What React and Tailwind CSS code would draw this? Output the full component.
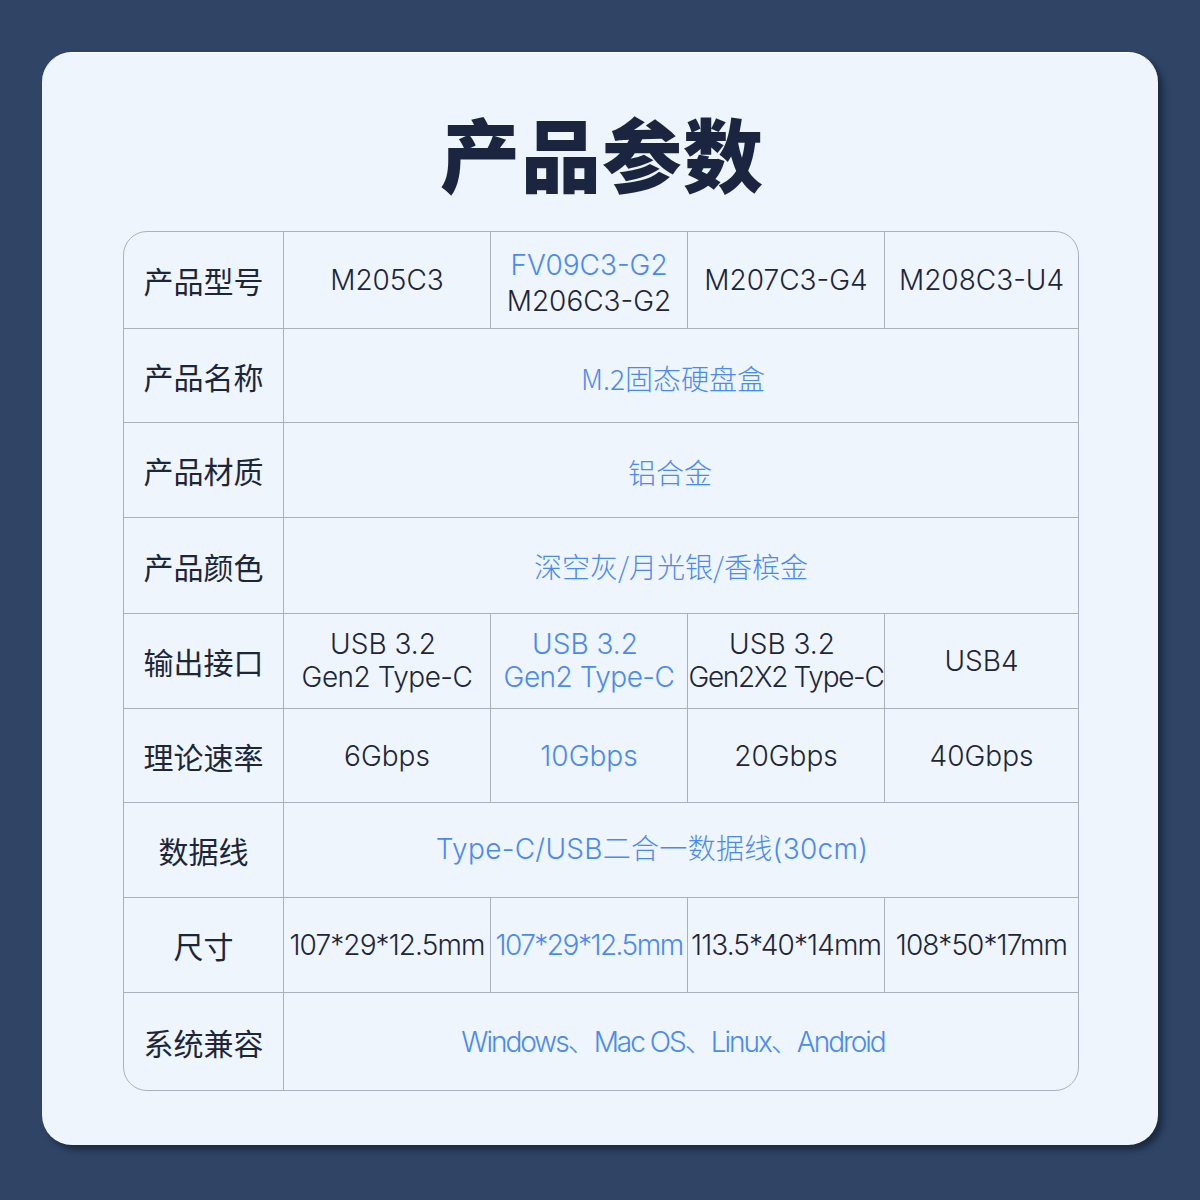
import React from "react";

const DARK = "text-[#1d2639]";
const BLUE = "text-[#4a8af4]";
const CJK = { fontFamily: "'Noto Sans CJK SC', sans-serif", fontWeight: 300 };

function Cell({ children, className = "" }) {
  return (
    <div className={"flex flex-col items-center justify-center text-center whitespace-nowrap border-[#a9b1be] " + className}>
      {children}
    </div>
  );
}

function Label({ children, last }) {
  return (
    <div
      className={"flex items-center justify-center border-r border-[#a9b1be] text-[30px] text-[#1d2639] " + (last ? "" : "border-b")}
      style={{ fontFamily: "'Noto Sans CJK SC', sans-serif", fontWeight: 400 }}
    >
      {children}
    </div>
  );
}

export default function App() {
  const font = { fontFamily: "Inter, 'Noto Sans CJK SC', sans-serif" };
  return (
    <div className="w-[1200px] h-[1200px] bg-[#304566] pt-[52px] pl-[42px]" style={font}>
      <div className="w-[1116px] h-[1093px] rounded-[30px] bg-[#eef5fd] shadow-[5px_5px_6px_rgba(10,20,40,0.55)] border-t border-white flex flex-col items-center pt-[58px]">
        <div className="h-[80px] text-[80px] leading-[80px] text-[#1b2540] tracking-[1px] ml-[4px]" style={{ fontFamily: "'Noto Sans CJK SC', sans-serif", fontWeight: 900 }}>
          产品参数
        </div>
        <div className="mt-[40px] ml-[2px] w-[956px] h-[860px] border border-[#a9b1be] rounded-[24px] overflow-hidden grid grid-cols-[160px_207px_197px_197px_193px] grid-rows-[97px_94px_95px_96px_95px_94px_95px_95px_97px] text-[28px] font-light leading-[34px]">
          {/* Row 1 */}
          <Label>产品型号</Label>
          <Cell className={"border-r border-b " + DARK}>M205C3</Cell>
          <Cell className="border-r border-b leading-[36px] pt-[5px]">
            <span className={BLUE}>FV09C3-G2</span>
            <span className={DARK}>M206C3-G2</span>
          </Cell>
          <Cell className={"border-r border-b " + DARK}>M207C3-G4</Cell>
          <Cell className={"border-b " + DARK}>M208C3-U4</Cell>

          {/* Row 2 */}
          <Label>产品名称</Label>
          <Cell className={"col-span-4 border-b " + BLUE}><span className="ml-[-16px] mt-[4px]" style={CJK}>M.2固态硬盘盒</span></Cell>

          {/* Row 3 */}
          <Label>产品材质</Label>
          <Cell className={"col-span-4 border-b " + BLUE}><span className="ml-[-22px] mt-[4px]" style={CJK}>铝合金</span></Cell>

          {/* Row 4 */}
          <Label>产品颜色</Label>
          <Cell className={"col-span-4 border-b " + BLUE}><span className="ml-[-20px]" style={CJK}>深空灰/月光银/香槟金</span></Cell>

          {/* Row 5 */}
          <Label>输出接口</Label>
          <Cell className={"border-r border-b leading-[33px] " + DARK}><span className="ml-[-8px]">USB 3.2</span><span className="tracking-[-0.5px]">Gen2 Type-C</span></Cell>
          <Cell className={"border-r border-b leading-[33px] " + BLUE}><span className="ml-[-8px]">USB 3.2</span><span className="tracking-[-0.5px]">Gen2 Type-C</span></Cell>
          <Cell className={"border-r border-b leading-[33px] " + DARK}><span className="ml-[-8px]">USB 3.2</span><span className="tracking-[-1.3px]">Gen2X2 Type-C</span></Cell>
          <Cell className={"border-b " + DARK}>USB4</Cell>

          {/* Row 6 */}
          <Label>理论速率</Label>
          <Cell className={"border-r border-b " + DARK}>6Gbps</Cell>
          <Cell className={"border-r border-b " + BLUE}>10Gbps</Cell>
          <Cell className={"border-r border-b " + DARK}>20Gbps</Cell>
          <Cell className={"border-b " + DARK}>40Gbps</Cell>

          {/* Row 7 */}
          <Label>数据线</Label>
          <Cell className={"col-span-4 border-b " + BLUE}><span className="ml-[-58px] mt-[-4px] tracking-[0.3px]">Type-C/USB<span style={CJK}>二合一数据线</span>(30cm)</span></Cell>

          {/* Row 8 */}
          <Label>尺寸</Label>
          <Cell className={"border-r border-b tracking-[-0.9px] " + DARK}>107*29*12.5mm</Cell>
          <Cell className={"border-r border-b tracking-[-1.5px] " + BLUE}>107*29*12.5mm</Cell>
          <Cell className={"border-r border-b tracking-[-0.9px] " + DARK}>113.5*40*14mm</Cell>
          <Cell className={"border-b tracking-[-0.9px] " + DARK}>108*50*17mm</Cell>

          {/* Row 9 */}
          <Label last>系统兼容</Label>
          <Cell className={"col-span-4 tracking-[-2px] " + BLUE}><span className="ml-[-16px]">Windows、Mac OS、Linux、Android</span></Cell>
        </div>
      </div>
    </div>
  );
}
